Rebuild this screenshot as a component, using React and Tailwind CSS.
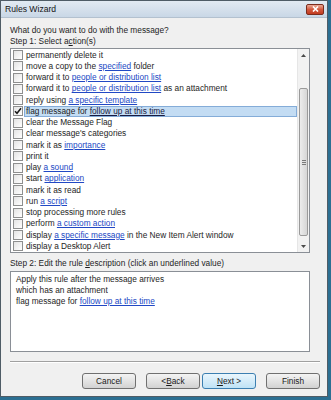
import React from "react";

const rows = [
  [["permanently delete it"]],
  [["move a copy to the "], ["specified", 1], [" folder"]],
  [["forward it to "], ["people or distribution list", 1]],
  [["forward it to "], ["people or distribution list", 1], [" as an attachment"]],
  [["reply using "], ["a specific template", 1]],
  [["flag message for "], ["follow up at this time", 1]],
  [["clear the Message Flag"]],
  [["clear message's categories"]],
  [["mark it as "], ["importance", 1]],
  [["print it"]],
  [["play "], ["a sound", 1]],
  [["start "], ["application", 1]],
  [["mark it as read"]],
  [["run "], ["a script", 1]],
  [["stop processing more rules"]],
  [["perform "], ["a custom action", 1]],
  [["display "], ["a specific message", 1], [" in the New Item Alert window"]],
  [["display a Desktop Alert"]],
];

function Checkbox({ checked }) {
  return (
    <div className="w-[10px] h-[10px] border border-[#8e8f8f] bg-linear-to-br from-[#e4e4e4] to-white flex items-center justify-center shrink-0">
      {checked && (
        <svg width="8" height="8" viewBox="0 0 8 8">
          <path d="M1 4.2 L3 6.3 L7 1.2" fill="none" stroke="#1a1a1a" strokeWidth="1.5" />
        </svg>
      )}
    </div>
  );
}

function Row({ segs, idx }) {
  const selected = idx === 5;
  return (
    <div className="h-[11.25px] flex items-center">
      <div className="w-[13px] pl-[2px] flex items-center">
        <Checkbox checked={selected} />
      </div>
      <div
        className={
          "flex-1 h-full flex items-center pl-[1px] whitespace-pre " +
          (selected ? "bg-[#c3dcf3] border border-[#84acd8]" : "border border-transparent")
        }
      >
        {segs.map((s, i) =>
          s[1] ? (
            <span key={i} className={"underline " + (selected ? "text-[#1a1a40]" : "text-[#2148c4]")}>
              {s[0]}
            </span>
          ) : (
            <span key={i}>{s[0]}</span>
          )
        )}
      </div>
    </div>
  );
}

function Button({ children, def, cls }) {
  return (
    <div
      className={
        "w-[54px] h-[16px] rounded-[3px] border flex items-center justify-center text-[#1a1a1a] " +
        (def
          ? "border-[#3c7fb1] bg-linear-to-b from-[#eaf6fd] to-[#bfe2f6]"
          : "border-[#707070] bg-linear-to-b from-[#f4f4f4] to-[#d2d2d2]") +
        " " +
        (cls || "")
      }
    >
      {children}
    </div>
  );
}

export default function App() {
  return (
    <div className="w-[331px] h-[400px] bg-[#2c6f92] font-['Liberation_Sans',Arial,sans-serif] text-[8.3px] leading-[11px] text-[#1e1e1e]">
      <div className="w-[328px] h-[397px] border border-[#4f5c66] flex flex-col">
        <div className="h-[17px] bg-linear-to-b from-[#e2eaf2] to-[#c9d7e6] border-b border-[#b3c1cf] flex items-center justify-between pl-[4px] pr-[3px]">
          <span className="text-[8.6px] text-[#141414]">Rules Wizard</span>
          <div className="w-[18px] h-[11px] rounded-[2px] border border-[#7b2c1d] bg-linear-to-b from-[#eaa997] via-[#d2583e] to-[#c13a1f] flex items-center justify-center">
            <svg width="7" height="6" viewBox="0 0 7 6">
              <path d="M1 0.5 L6 5.5 M6 0.5 L1 5.5" stroke="white" strokeWidth="1.6" />
            </svg>
          </div>
        </div>
        <div className="flex-1 bg-[#f0f0f0] pl-[9px] pr-[7px] pt-[7px] flex flex-col">
          <div>What do you want to do with the message?</div>
          <div>
            Step 1: Select a<span className="underline">c</span>tion(s)
          </div>
          <div className="mt-[1px] w-[300px] h-[205px] border border-[#8a8f96] bg-white flex">
            <div className="flex-1 pt-[0.5px]">
              {rows.map((r, i) => (
                <Row key={i} segs={r} idx={i} />
              ))}
            </div>
            <div className="w-[12px] bg-[#f2f2f2] border-l border-[#e6e6e6] flex flex-col">
              <div className="h-[12px] flex items-center justify-center">
                <svg width="5" height="3" viewBox="0 0 5 3">
                  <path d="M0 3 L2.5 0 L5 3 Z" fill="#4a4a4a" />
                </svg>
              </div>
              <div className="h-[27px]" />
              <div className="h-[148px] mx-[1px] rounded-[2px] border border-[#9a9a9a] bg-linear-to-r from-[#ececec] to-[#d6d6d6] flex flex-col items-center justify-center gap-[1px]">
                <div className="w-[4px] h-[1px] bg-[#7a7a7a]" />
                <div className="w-[4px] h-[1px] bg-[#7a7a7a]" />
                <div className="w-[4px] h-[1px] bg-[#7a7a7a]" />
              </div>
              <div className="h-[4px]" />
              <div className="h-[12px] flex items-center justify-center">
                <svg width="5" height="3" viewBox="0 0 5 3">
                  <path d="M0 0 L2.5 3 L5 0 Z" fill="#4a4a4a" />
                </svg>
              </div>
            </div>
          </div>
          <div className="mt-[5px]">
            Step 2: Edit the rule <span className="underline">d</span>escription (click an underlined value)
          </div>
          <div className="mt-[2px] w-[300px] h-[81px] border border-[#8a8f96] bg-white pl-[5px] pt-[1.5px]">
            <div>Apply this rule after the message arrives</div>
            <div>which has an attachment</div>
            <div>
              flag message for <span className="underline text-[#2148c4]">follow up at this time</span>
            </div>
          </div>
          <div className="mt-[9px] border-t border-[#a0a0a0] border-b border-b-white" />
          <div className="mt-[10px] flex justify-end">
            <Button cls="mr-[10px]">Cancel</Button>
            <Button cls="mr-[2px]">
              &lt; <span className="underline">B</span>ack
            </Button>
            <Button def cls="mr-[10px]">
              <span className="underline">N</span>ext &gt;
            </Button>
            <Button>Finish</Button>
          </div>
        </div>
      </div>
    </div>
  );
}
